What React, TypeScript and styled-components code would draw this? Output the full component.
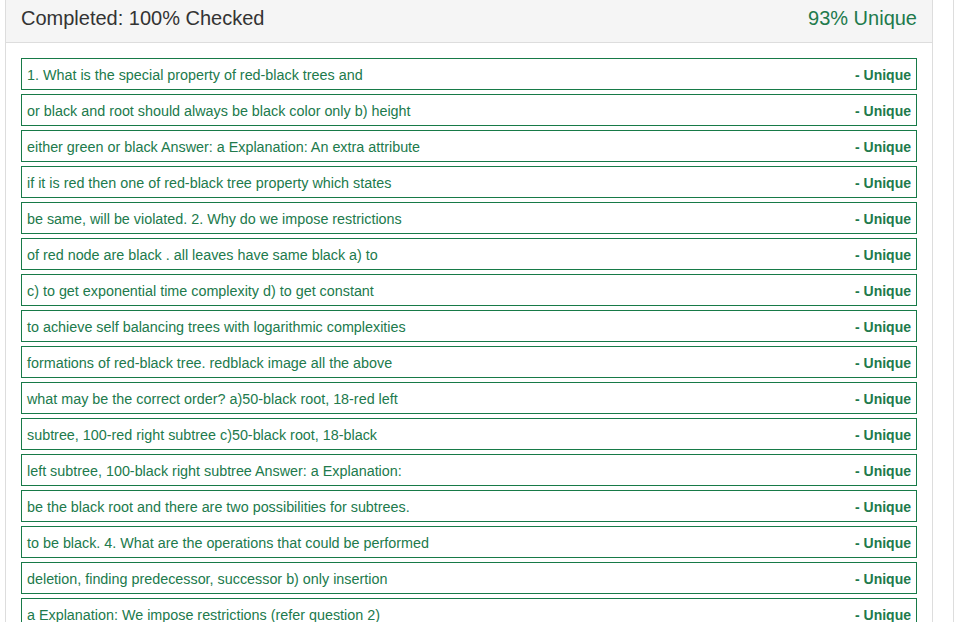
import React from "react";
import styled, { createGlobalStyle } from "styled-components";

const Global = createGlobalStyle`
  html, body { margin: 0; padding: 0; background: #fff; }
  body { font-family: "Liberation Sans", Arial, sans-serif; overflow: hidden; }
`;

const Page = styled.div`
  display: flex;
  align-items: flex-start;
  gap: 20px;
  padding-left: 5px;
  height: 622px;
  overflow: hidden;
`;

const Panel = styled.div`
  width: 928px;
  flex: none;
  box-sizing: border-box;
  border: 1px solid #ddd;
  border-top: none;
  background: #fff;
  height: 640px;
`;

const SidePanel = styled.div`
  flex: 1;
  height: 640px;
  border-left: 1px solid #ddd;
`;

const Header = styled.div`
  display: flex;
  justify-content: space-between;
  align-items: flex-start;
  height: 43px;
  box-sizing: border-box;
  padding: 6px 15px 0;
  background: #f5f5f5;
  border-bottom: 1px solid #ddd;
`;

const Title = styled.h3<{ $green?: boolean }>`
  margin: 0;
  font-size: 20px;
  font-weight: 400;
  color: ${(p) => (p.$green ? "#217a4c" : "#333")};
  line-height: 24px;
`;

const Body = styled.div`
  display: flex;
  flex-direction: column;
  gap: 4px;
  padding: 15px 15px;
`;

const Row = styled.div`
  display: flex;
  justify-content: space-between;
  align-items: center;
  height: 32px;
  box-sizing: border-box;
  border: 1px solid #177a48;
  padding: 1px 5px 0;
  color: #217a4c;
  font-size: 14.35px;
`;

const Tag = styled.span`
  font-weight: 700;
  font-size: 14px;
`;

const lines = [
  "1. What is the special property of red-black trees and",
  "or black and root should always be black color only b) height",
  "either green or black Answer: a Explanation: An extra attribute",
  "if it is red then one of red-black tree property which states",
  "be same, will be violated. 2. Why do we impose restrictions",
  "of red node are black . all leaves have same black a) to",
  "c) to get exponential time complexity d) to get constant",
  "to achieve self balancing trees with logarithmic complexities",
  "formations of red-black tree. redblack image all the above",
  "what may be the correct order? a)50-black root, 18-red left",
  "subtree, 100-red right subtree c)50-black root, 18-black",
  "left subtree, 100-black right subtree Answer: a Explanation:",
  "be the black root and there are two possibilities for subtrees.",
  "to be black. 4. What are the operations that could be performed",
  "deletion, finding predecessor, successor b) only insertion",
  "a Explanation: We impose restrictions (refer question 2)",
];

export default function App() {
  return (
    <>
      <Global />
      <Page>
        <Panel>
          <Header>
            <Title>Completed: 100% Checked</Title>
            <Title $green>93% Unique</Title>
          </Header>
          <Body>
            {lines.map((l, i) => (
              <Row key={i}>
                <span>{l}</span>
                <Tag>- Unique</Tag>
              </Row>
            ))}
          </Body>
        </Panel>
        <SidePanel />
      </Page>
    </>
  );
}
